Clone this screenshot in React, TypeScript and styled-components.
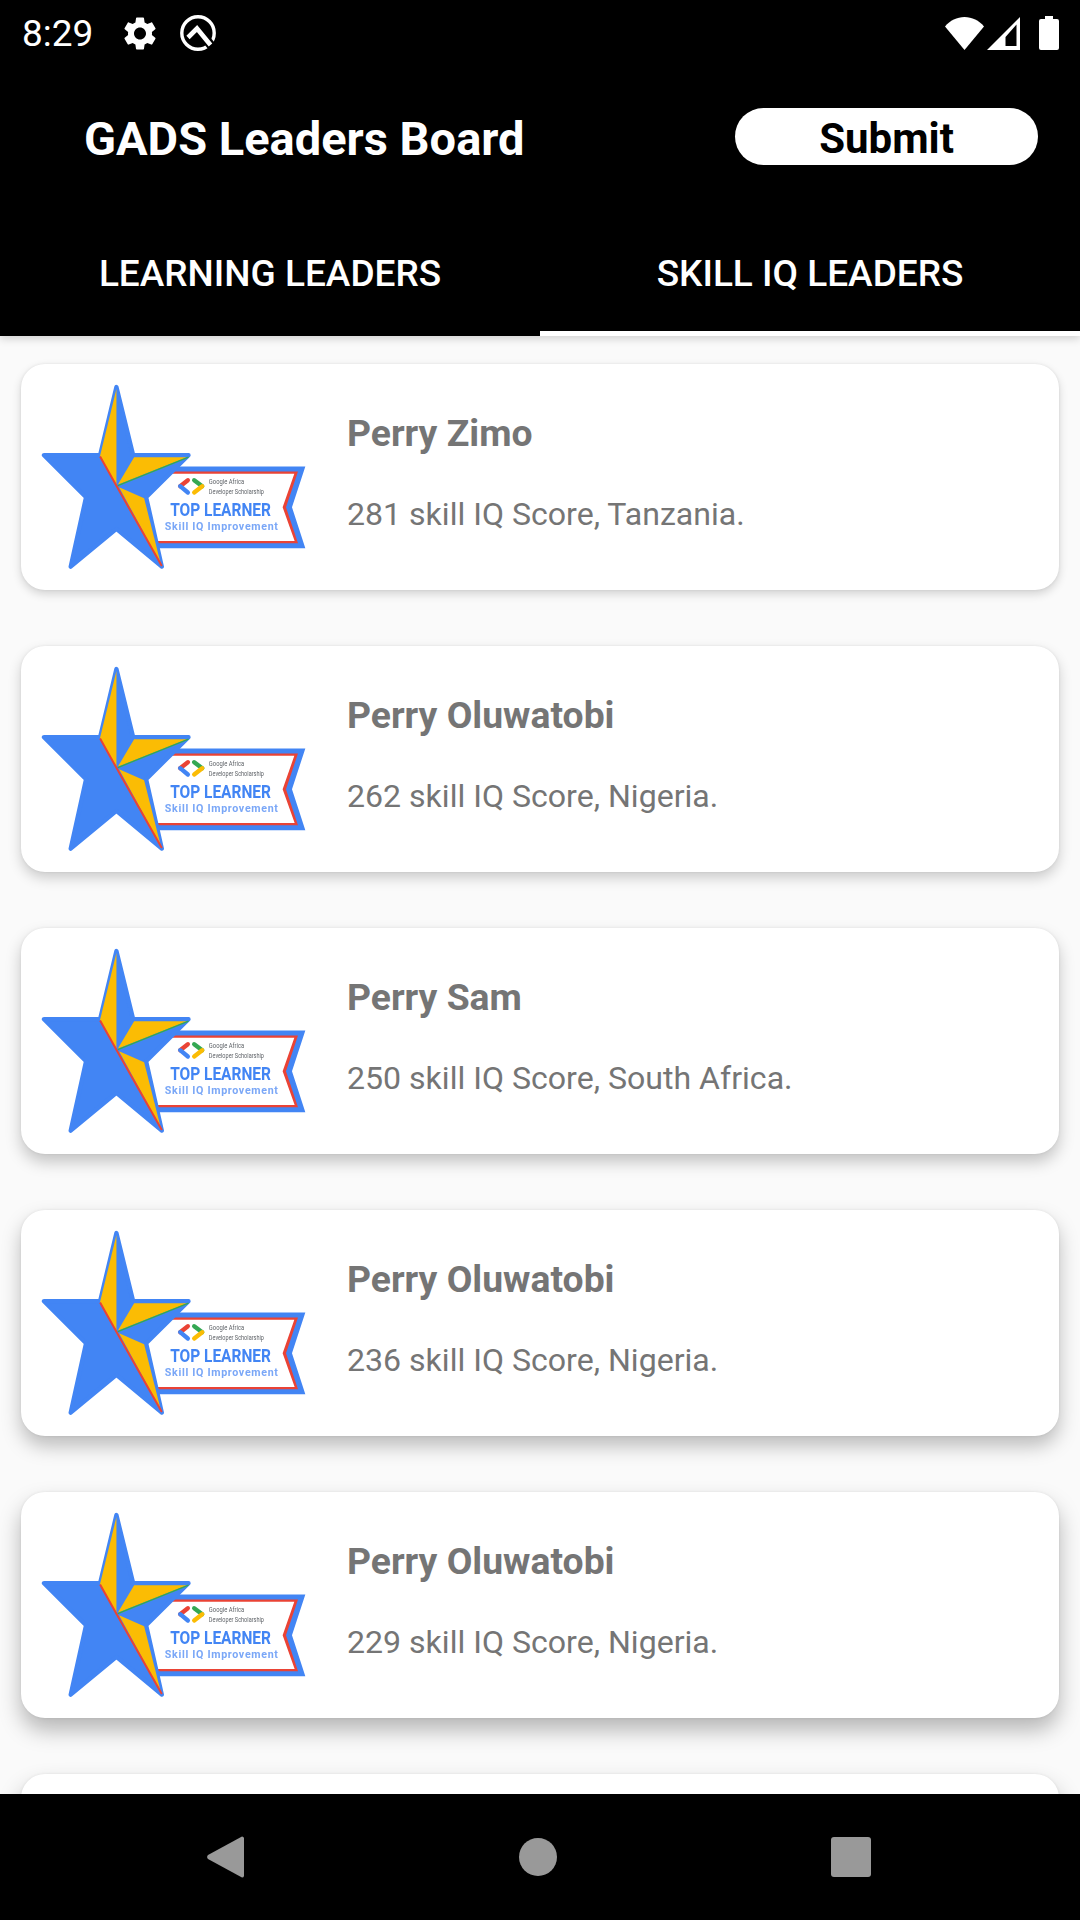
import React from "react";
import styled, { createGlobalStyle } from "styled-components";

const GlobalStyle = createGlobalStyle`
  html, body {
    margin: 0;
    padding: 0;
    background: #000;
  }
  * {
    box-sizing: border-box;
  }
`;

const Screen = styled.div`
  width: 1080px;
  height: 1920px;
  display: flex;
  flex-direction: column;
  overflow: hidden;
  background: #fafafa;
  font-family: Roboto, "Liberation Sans", sans-serif;
`;

const Header = styled.header`
  flex: none;
  position: relative;
  z-index: 1;
  background: #000;
  color: #fff;
  box-shadow: 0 3px 8px rgba(0, 0, 0, 0.16);
`;

const StatusBar = styled.div`
  height: 66px;
  display: flex;
  align-items: center;
  padding: 0 21px 0 22px;
`;

const Clock = styled.span`
  font-size: 37px;
  font-weight: 400;
  width: 78px;
  line-height: 1;
`;

const StatusLeft = styled.div`
  display: flex;
  align-items: center;
  gap: 24px;
  flex: 1;
`;

const StatusRight = styled.div`
  display: flex;
  align-items: center;
`;

const TitleRow = styled.div`
  height: 141px;
  display: flex;
  align-items: center;
  justify-content: space-between;
  padding: 0 42px 0 84px;
`;

const Title = styled.h1`
  margin: 0;
  padding-top: 3px;
  font-size: 47px;
  font-weight: 700;
  line-height: 1;
`;

const SubmitButton = styled.button`
  width: 303px;
  height: 57px;
  border: 0;
  border-radius: 29px;
  background: #fff;
  color: #000;
  font-family: inherit;
  font-size: 42px;
  font-weight: 700;
  line-height: 1;
  padding: 5px 0 0;
`;

const Tabs = styled.nav`
  display: grid;
  grid-template-columns: 1fr 1fr;
  height: 129px;
`;

const Tab = styled.div<{ $active?: boolean }>`
  display: flex;
  align-items: center;
  justify-content: center;
  padding-top: 8px;
  font-size: 37px;
  font-weight: 500;
  border-bottom: 5px solid ${(p) => (p.$active ? "#fff" : "#000")};
`;

const List = styled.main`
  flex: 1;
  min-height: 0;
  overflow: hidden;
  display: flex;
  flex-direction: column;
  gap: 56px;
  padding: 28px 21px 0;
`;

const Card = styled.article<{ $depth: number }>`
  flex: none;
  height: 226px;
  display: flex;
  align-items: center;
  padding-left: 19px;
  background: #fff;
  border-radius: 24px;
  box-shadow:
    0 ${(p) => 4 + p.$depth * 2}px ${(p) => 10 + p.$depth * 3}px
      rgba(0, 0, 0, ${(p) => 0.16 + p.$depth * 0.03}),
    0 0 3px rgba(0, 0, 0, 0.08);
`;

const BadgeSvg = styled.svg`
  flex: none;
  width: 267px;
  height: 187px;
  margin-top: -2px;
  filter: blur(0.35px);
`;

const CardText = styled.div`
  margin: 0 0 9px 40px;
  display: flex;
  flex-direction: column;
  gap: 41px;
  color: #757575;
`;

const Name = styled.div`
  font-size: 37.3px;
  font-weight: 700;
  line-height: 43px;
`;

const Score = styled.div`
  font-size: 32.1px;
  font-weight: 400;
  line-height: 37px;
`;

const NavBar = styled.footer`
  flex: none;
  position: relative;
  z-index: 1;
  height: 126px;
  background: #000;
  display: flex;
  align-items: center;
  justify-content: space-between;
  padding: 0 209px 0 207px;
`;

const Blue = "#4285f4";
const Yellow = "#fbbc04";
const Red = "#ea4335";
const Green = "#34a853";

const Badge = () => (
  <BadgeSvg viewBox="60 70 800 560">
    <polygon points="450,320 855,320 815,442 855,565 405,565 370,420" fill={Blue} />
    <polygon points="450,335 833,335 797,442 833,550 400,550 370,420" fill={Red} />
    <polygon points="450,342 822,342 787,442 823,543 400,543 370,420" fill="#fff" />
    <polygon
      points="289,82 339,286 505,286 378,412 425,620 289,507 152,620 198,412 72,286 240,286"
      fill={Blue}
      stroke={Blue}
      strokeWidth="13"
      strokeLinejoin="round"
    />
    <polygon points="289,88 289,378 240,288" fill={Yellow} />
    <polygon points="500,292 342,292 293,375" fill={Yellow} />
    <polygon points="297,382 372,415 422,612" fill={Yellow} />
    <polyline points="240,290 289,378 425,618" fill="none" stroke={Red} strokeWidth="6" />
    <line x1="293" y1="377" x2="505" y2="292" stroke={Green} strokeWidth="4" />
    <g fill="none" strokeWidth="13" strokeLinecap="round">
      <line x1="503" y1="361" x2="480" y2="379" stroke={Red} />
      <line x1="480" y1="379" x2="503" y2="398" stroke={Blue} />
      <line x1="522" y1="361" x2="546" y2="379" stroke={Green} />
      <line x1="546" y1="379" x2="522" y2="398" stroke={Yellow} />
    </g>
    <text x="566" y="373" fontSize="22" textLength="106" lengthAdjust="spacingAndGlyphs" fill="#5f6368">
      Google Africa
    </text>
    <text x="566" y="401" fontSize="22" textLength="165" lengthAdjust="spacingAndGlyphs" fill="#5f6368">
      Developer Scholarship
    </text>
    <text x="450" y="468" fontSize="54" fontWeight="700" textLength="302" lengthAdjust="spacingAndGlyphs" fill={Blue}>
      TOP LEARNER
    </text>
    <text x="434" y="511" fontSize="32" fontWeight="700" textLength="339" fill="#7aa7f7">
      Skill IQ Improvement
    </text>
  </BadgeSvg>
);

const leaders = [
  { name: "Perry Zimo", score: 281, country: "Tanzania" },
  { name: "Perry Oluwatobi", score: 262, country: "Nigeria" },
  { name: "Perry Sam", score: 250, country: "South Africa" },
  { name: "Perry Oluwatobi", score: 236, country: "Nigeria" },
  { name: "Perry Oluwatobi", score: 229, country: "Nigeria" },
];

export default function App() {
  return (
    <Screen>
      <GlobalStyle />
      <Header>
        <StatusBar>
          <StatusLeft>
            <Clock>8:29</Clock>
            <svg width="32" height="33" viewBox="2.6 2.1 18.8 19.8" fill="#fff">
              <path d="M19.14 12.94c.04-.3.06-.61.06-.94 0-.32-.02-.64-.07-.94l2.03-1.58c.18-.14.23-.41.12-.61l-1.92-3.32c-.12-.22-.37-.29-.59-.22l-2.39.96c-.5-.38-1.03-.7-1.62-.94l-.36-2.54c-.04-.24-.24-.41-.48-.41h-3.84c-.24 0-.43.17-.47.41l-.36 2.54c-.59.24-1.13.57-1.62.94l-2.39-.96c-.22-.08-.47 0-.59.22L2.74 8.87c-.12.21-.08.47.12.61l2.03 1.58c-.05.3-.09.63-.09.94s.02.64.07.94l-2.03 1.58c-.18.14-.23.41-.12.61l1.92 3.32c.12.22.37.29.59.22l2.39-.96c.5.38 1.03.7 1.62.94l.36 2.54c.05.24.24.41.48.41h3.84c.24 0 .44-.17.47-.41l.36-2.54c.59-.24 1.13-.56 1.62-.94l2.39.96c.22.08.47 0 .59-.22l1.92-3.32c.12-.22.07-.47-.12-.61l-2.01-1.58zM12 15.6c-1.98 0-3.6-1.62-3.6-3.6s1.62-3.6 3.6-3.6 3.6 1.62 3.6 3.6-1.62 3.6-3.6 3.6z" />
            </svg>
            <svg width="36" height="36" viewBox="0 0 36 36" fill="none">
              <circle cx="18" cy="18" r="16.2" stroke="#fff" strokeWidth="3.4" />
              <path d="M18 14 33 33" stroke="#000" strokeWidth="9" />
              <path d="M8 22.5 17 13.5 30.5 30" stroke="#fff" strokeWidth="4.6" />
            </svg>
          </StatusLeft>
          <StatusRight>
            <svg width="39" height="33" viewBox="0 0 39 33" fill="#fff">
              <path d="M0 9.5C5 3.5 12 0 19.5 0S34 3.5 39 9.5L19.5 33z" />
            </svg>
            <svg width="33" height="33" viewBox="0 0 33 33" fill="#fff" style={{ marginLeft: 3 }}>
              <path fillRule="evenodd" d="M33 0v33H0zM29.5 7.5 18.5 20v9h11z" />
            </svg>
            <svg width="20" height="34" viewBox="0 0 20 34" fill="#fff" style={{ marginLeft: 19 }}>
              <path d="M6 0h8v3h4a2 2 0 0 1 2 2v27a2 2 0 0 1-2 2H2a2 2 0 0 1-2-2V5a2 2 0 0 1 2-2h4z" />
            </svg>
          </StatusRight>
        </StatusBar>
        <TitleRow>
          <Title>GADS Leaders Board</Title>
          <SubmitButton>Submit</SubmitButton>
        </TitleRow>
        <Tabs>
          <Tab>LEARNING LEADERS</Tab>
          <Tab $active>SKILL IQ LEADERS</Tab>
        </Tabs>
      </Header>
      <List>
        {leaders.map((l, i) => (
          <Card key={i} $depth={i}>
            <Badge />
            <CardText>
              <Name>{l.name}</Name>
              <Score>
                {l.score} skill IQ Score, {l.country}.
              </Score>
            </CardText>
          </Card>
        ))}
        <Card $depth={5} />
      </List>
      <NavBar>
        <svg width="37" height="42" viewBox="0 0 37 42" fill="#999">
          <path d="M35 0.5a2 2 0 0 1 2 1.5v38a2 2 0 0 1-2 1.5L1 23a3 3 0 0 1 0-4z" />
        </svg>
        <svg width="38" height="38" viewBox="0 0 38 38" fill="#999">
          <circle cx="19" cy="19" r="19" />
        </svg>
        <svg width="40" height="40" viewBox="0 0 40 40" fill="#999">
          <rect width="40" height="40" rx="3" />
        </svg>
      </NavBar>
    </Screen>
  );
}
